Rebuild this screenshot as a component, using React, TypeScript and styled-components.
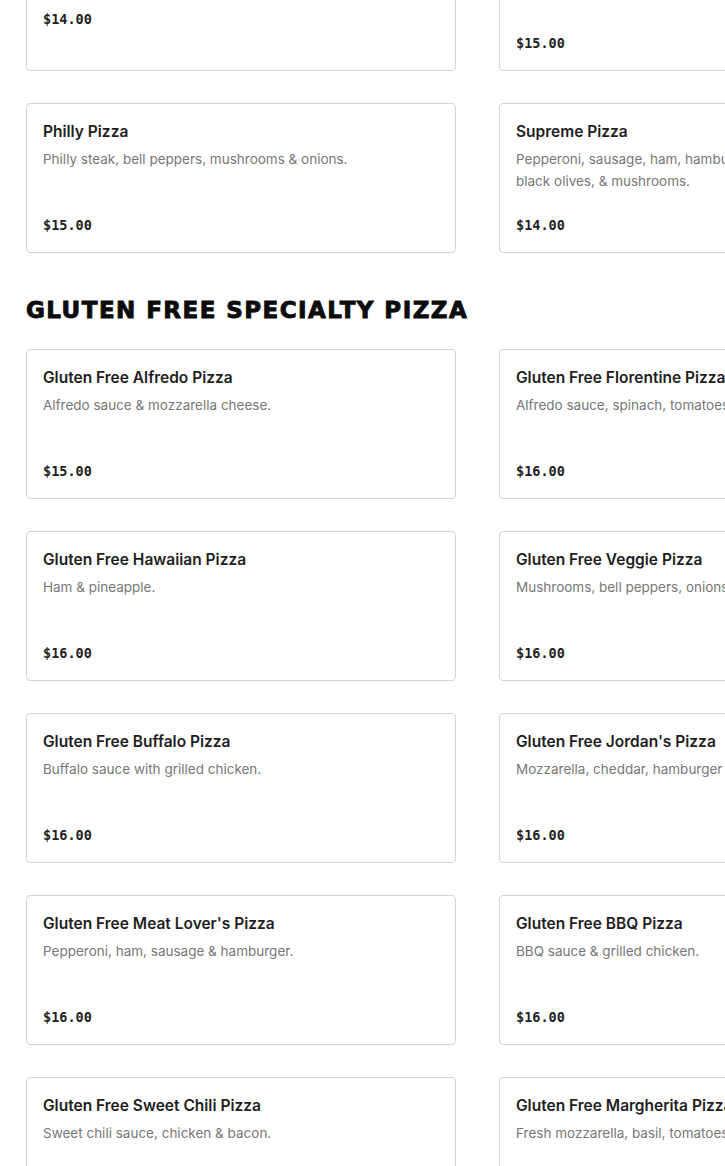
import styled, { createGlobalStyle } from "styled-components";

const GlobalStyle = createGlobalStyle`
  html, body {
    margin: 0;
    padding: 0;
    background: #ffffff;
    overflow: hidden;
  }
  body {
    font-family: Inter, "Noto Sans", "Liberation Sans", sans-serif;
    color: #1c1c1c;
  }
`;

interface Item {
  name: string;
  desc: string;
  price: string;
}

const specialty: Item[] = [
  { name: "Chicken Bacon Ranch Pizza", desc: "Ranch sauce, grilled chicken & bacon.", price: "$14.00" },
  {
    name: "Loaded Baked Potato Pizza with Bacon, Cheddar & Green Onions",
    desc: "Alfredo sauce & potatoes.",
    price: "$15.00",
  },
  { name: "Philly Pizza", desc: "Philly steak, bell peppers, mushrooms & onions.", price: "$15.00" },
  { name: "Supreme Pizza", desc: "Pepperoni, sausage, ham, hamburger, bell peppers, onions, black olives, & mushrooms.", price: "$14.00" },
];

const glutenFree: Item[] = [
  { name: "Gluten Free Alfredo Pizza", desc: "Alfredo sauce & mozzarella cheese.", price: "$15.00" },
  { name: "Gluten Free Florentine Pizza", desc: "Alfredo sauce, spinach, tomatoes & garlic.", price: "$16.00" },
  { name: "Gluten Free Hawaiian Pizza", desc: "Ham & pineapple.", price: "$16.00" },
  { name: "Gluten Free Veggie Pizza", desc: "Mushrooms, bell peppers, onions & black olives.", price: "$16.00" },
  { name: "Gluten Free Buffalo Pizza", desc: "Buffalo sauce with grilled chicken.", price: "$16.00" },
  { name: "Gluten Free Jordan's Pizza", desc: "Mozzarella, cheddar, hamburger & bacon.", price: "$16.00" },
  { name: "Gluten Free Meat Lover's Pizza", desc: "Pepperoni, ham, sausage & hamburger.", price: "$16.00" },
  { name: "Gluten Free BBQ Pizza", desc: "BBQ sauce & grilled chicken.", price: "$16.00" },
  { name: "Gluten Free Sweet Chili Pizza", desc: "Sweet chili sauce, chicken & bacon.", price: "$16.00" },
  { name: "Gluten Free Margherita Pizza", desc: "Fresh mozzarella, basil, tomatoes & olive oil.", price: "$16.00" },
];

// the page is shown scrolled: the first row of cards starts above the frame
const Page = styled.main`
  width: 903px;
  padding-left: 26px;
  margin-top: -103px;
`;

const Section = styled.section`
  & + & {
    margin-top: 45px;
  }
`;

const Heading = styled.h2`
  margin: 0 0 27px;
  font-family: "DejaVu Sans", "Liberation Sans", sans-serif;
  font-size: 23px;
  line-height: 24px;
  font-weight: 700;
  letter-spacing: 1.45px;
  color: #0c0c0c;
  -webkit-text-stroke: 0.9px #0c0c0c;
  text-transform: uppercase;
`;

const Grid = styled.div`
  display: grid;
  grid-template-columns: 430px 430px;
  column-gap: 43px;
  row-gap: 32px;
`;

const Card = styled.article`
  box-sizing: border-box;
  border: 1px solid #d4d4d4;
  border-radius: 4px;
  padding: 16px 16px 17px;
  background: #fff;
`;

const Title = styled.h3`
  margin: 0;
  font-size: 15.5px;
  line-height: 24px;
  font-weight: 600;
  color: #1e1e1e;
`;

const Desc = styled.p`
  margin: 4px 0 0;
  min-height: 44px;
  font-size: 13.5px;
  line-height: 22px;
  color: #777777;
`;

const Price = styled.div`
  margin-top: 23px;
  font-family: "DejaVu Sans Mono", "Liberation Mono", monospace;
  font-size: 13.5px;
  line-height: 20px;
  font-weight: 700;
  color: #222;
`;

const MenuCard = ({ item }: { item: Item }) => (
  <Card>
    <Title>{item.name}</Title>
    <Desc>{item.desc}</Desc>
    <Price>{item.price}</Price>
  </Card>
);

export default function App() {
  return (
    <>
      <GlobalStyle />
      <Page>
        <Section>
          <Grid>
            {specialty.map((item) => (
              <MenuCard key={item.name} item={item} />
            ))}
          </Grid>
        </Section>
        <Section>
          <Heading>Gluten Free Specialty Pizza</Heading>
          <Grid>
            {glutenFree.map((item) => (
              <MenuCard key={item.name} item={item} />
            ))}
          </Grid>
        </Section>
      </Page>
    </>
  );
}
